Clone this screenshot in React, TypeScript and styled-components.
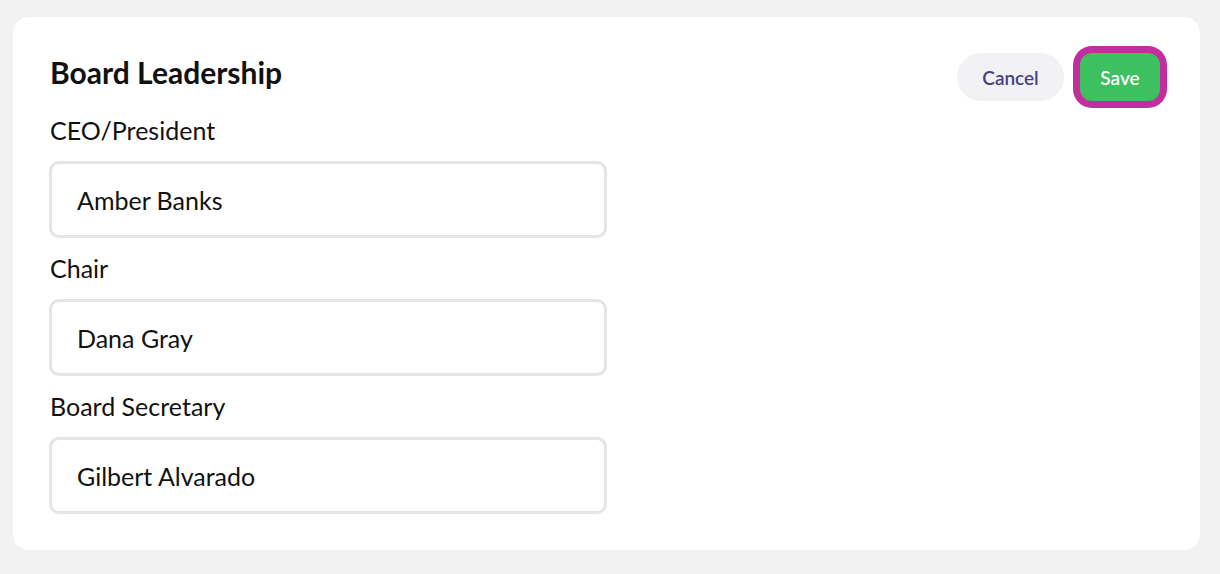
import React from "react";
import styled, { createGlobalStyle } from "styled-components";

const GlobalStyle = createGlobalStyle`
  html, body {
    margin: 0;
    padding: 0;
    background: #f2f2f2;
    font-family: Lato, "Open Sans", sans-serif;
  }
`;

const Page = styled.div`
  padding: 17px 20px 24px 13px;
`;

const Card = styled.section`
  background: #ffffff;
  border-radius: 16px;
  padding: 36px 37px 36px 36px;
`;

const Header = styled.div`
  display: flex;
  justify-content: space-between;
  align-items: center;
  height: 48px;
`;

const Title = styled.h2`
  margin: 0 0 10px 1px;
  font-size: 30px;
  font-weight: 700;
  color: #111;
  line-height: 36px;
`;

const Actions = styled.div`
  display: flex;
  align-items: center;
  gap: 16px;
  margin-right: 3px;
`;

const Button = styled.button<{ $primary?: boolean }>`
  height: 48px;
  border: none;
  font-family: inherit;
  font-size: 19px;
  font-weight: 600;
  cursor: pointer;
  padding: 0 ${(p) => (p.$primary ? "20px" : "24px")};
  min-width: ${(p) => (p.$primary ? "80px" : "107px")};
  border-radius: ${(p) => (p.$primary ? "12px" : "24px")};
  background: ${(p) => (p.$primary ? "#3dc160" : "#f2f2f4")};
  color: ${(p) => (p.$primary ? "#ffffff" : "#4a3f87")};
  box-shadow: ${(p) => (p.$primary ? "0 0 0 7px #c42d9e" : "none")};
`;

const Form = styled.div`
  display: flex;
  flex-direction: column;
  gap: 16px;
  margin-top: 15px;
`;

const Field = styled.label`
  display: flex;
  flex-direction: column;
  gap: 16px;
`;

const LabelText = styled.span`
  font-size: 25px;
  line-height: 29px;
  color: #111;
  padding-left: 1px;
`;

const Input = styled.input`
  box-sizing: border-box;
  width: 558px;
  height: 77px;
  border: 3px solid #e4e4e9;
  border-radius: 10px;
  padding: 0 25px;
  font-family: inherit;
  font-size: 25px;
  color: #111;
  background: #fff;
  outline: none;
`;

const fields = [
  { label: "CEO/President", value: "Amber Banks" },
  { label: "Chair", value: "Dana Gray" },
  { label: "Board Secretary", value: "Gilbert Alvarado" },
];

export default function App() {
  return (
    <>
      <GlobalStyle />
      <Page>
        <Card>
          <Header>
            <Title>Board Leadership</Title>
            <Actions>
              <Button>Cancel</Button>
              <Button $primary>Save</Button>
            </Actions>
          </Header>
          <Form>
            {fields.map((f) => (
              <Field key={f.label}>
                <LabelText>{f.label}</LabelText>
                <Input defaultValue={f.value} />
              </Field>
            ))}
          </Form>
        </Card>
      </Page>
    </>
  );
}
